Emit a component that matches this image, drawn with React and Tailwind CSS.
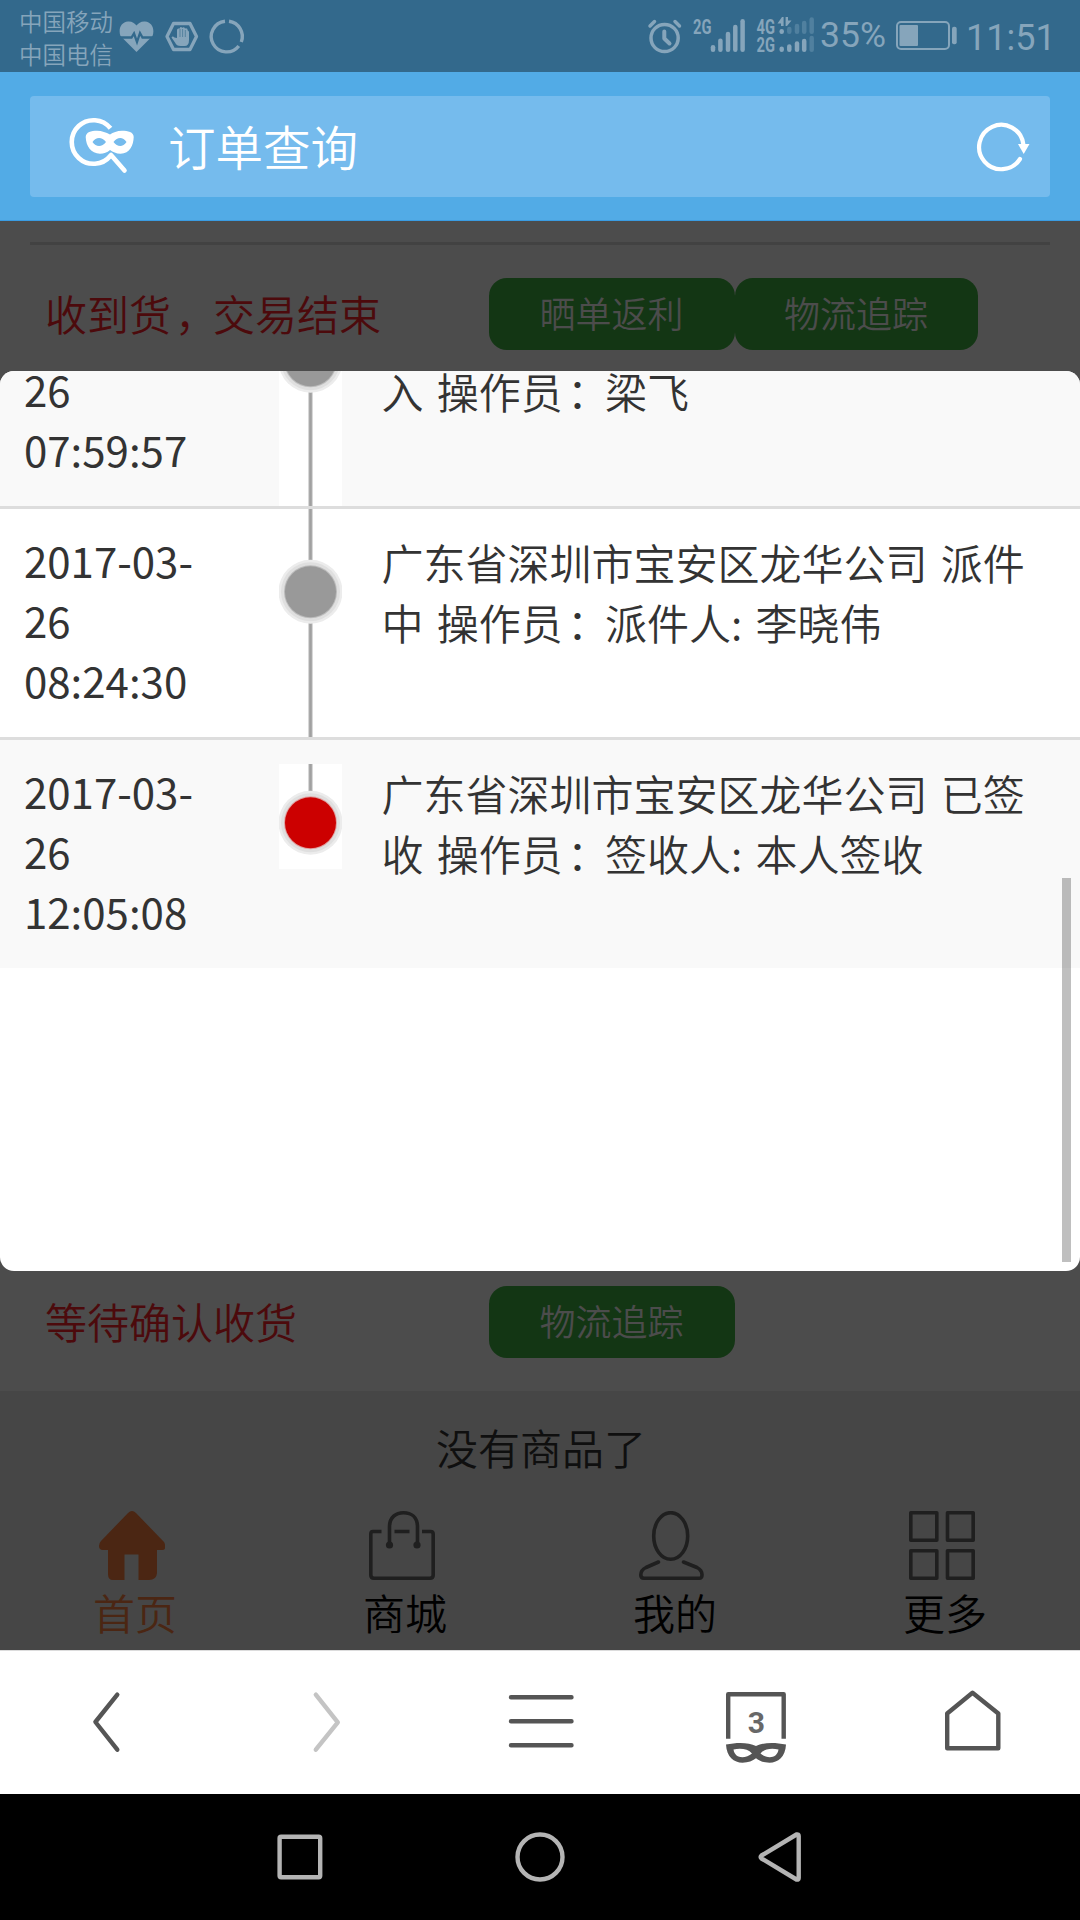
import React from "react";

// Icon whose viewBox is given in page units, drawn at natural size.
function Icon({ box, className = "", children }) {
  const [, , w, h] = box.split(" ");
  return (
    <svg viewBox={box} width={w} height={h} className={`block shrink-0 ${className}`} fill="none" aria-hidden="true">
      {children}
    </svg>
  );
}

function Bars({ bars, bottom, dim = [] }) {
  return bars.map(([x, top], i) => (
    <path
      key={x}
      d={`M${x} ${top + 2.2}V${bottom - 2.2}`}
      stroke={dim.includes(i) ? "#50809f" : "#86a5bb"}
      strokeWidth="4.5"
      strokeLinecap="round"
    />
  ));
}

function NetLabel({ x, y, children }) {
  return (
    <text x={x} y={y} fill="#86a5bb" fontFamily="Roboto" fontWeight="700" fontSize="21" textLength="18.5" lengthAdjust="spacingAndGlyphs">
      {children}
    </text>
  );
}

// Full-width punctuation sits slightly right of its default place in the cell.
function Punctuated({ children }) {
  return children.split(/([：，])/).map((part, i) =>
    part === "：" || part === "，" ? (
      <span key={i} className="relative left-[4px]">{part}</span>
    ) : (
      part
    )
  );
}

function StatusBar() {
  return (
    <div className="flex h-[72px] items-start bg-[#33698c] pl-[19px] pr-[30px] text-[#86a5bb]">
      <div className="w-[100px] shrink-0 whitespace-nowrap pt-[5px] text-[23.500px] leading-[32.500px]">
        <div>中国移动</div>
        <div>中国电信</div>
      </div>
      <Icon box="119 0 130 72">
        <path d="M136.500 52L120.500 36C118 29 121 22 128 21.500C132 21.200 134.500 23 136.500 25.500C138.500 23 141 21.200 145 21.500C152 22 155 29 152.500 36Z" fill="#86a5bb" />
        <path d="M119 37.500H131.500L134 33.500L137 42L140 33L142.500 37.500H154" stroke="#33698c" strokeWidth="2.300" />
        <path d="M173.500 23.500H190L196.500 36.500L190 49.500H173.500L167 36.500Z" stroke="#86a5bb" strokeWidth="3.300" strokeLinejoin="round" />
        <path d="M177 38V30Q177 28.500 178.500 28.500H179.800V28Q180.500 26.500 182 27.500V28Q184 26.500 185 28.500Q187.500 27.500 187.800 30.500Q189 31 189 32V40Q189 46 184.500 46H180.500Q176.500 46 175 42.500L171.500 37.500Q172.500 35.500 174.500 37.500Z" fill="#86a5bb" />
        <path d="M180 29V37M182.600 29V37M185.300 30V37" stroke="#33698c" strokeWidth=".6" />
        <path d="M225 21.200A15.400 15.400 0 1 0 238.800 46M229 21.300A15.400 15.400 0 0 1 241.300 42" stroke="#86a5bb" strokeWidth="3.400" />
      </Icon>
      <div className="ml-auto flex items-start">
        <Icon box="647 0 172 72">
          <circle cx="664.600" cy="38" r="13.600" stroke="#86a5bb" strokeWidth="3.500" />
          <path d="M664.300 31.500V38.500L669.500 43.500" stroke="#86a5bb" strokeWidth="4" strokeLinecap="round" strokeLinejoin="round" />
          <path d="M650 26L654.500 21.500M679.500 26L675 21.500" stroke="#86a5bb" strokeWidth="3.500" strokeLinecap="round" />
          <NetLabel x={693} y={34}>2G</NetLabel>
          <Bars bars={[[713, 45], [720.4, 38.5], [728, 31.7], [735.3, 24.7], [742.6, 19]]} bottom={52} />
          <NetLabel x={756.5} y={34}>4G</NetLabel>
          <NetLabel x={756.5} y={52}>2G</NetLabel>
          <Bars bars={[[781.7, 29], [789.3, 26.7], [797, 23.7], [804.2, 20.7], [811.7, 17.3]]} bottom={34} dim={[1, 2, 3, 4]} />
          <Bars bars={[[781.7, 46.5], [789.3, 44.3], [797, 41.3], [804.2, 38.7], [811.7, 35.7]]} bottom={52} dim={[4]} />
          <path d="M782 17H783.600V26H781V23.500H777.500ZM785.600 17H788V20.500H791.500L787 26H785.600Z" fill="#86a5bb" />
        </Icon>
        <div className="ml-px h-[72px] w-[66px] whitespace-nowrap pt-[14px] font-[Roboto] text-[35.500px] font-normal leading-[42px]">35%</div>
        <Icon box="895 0 63 72" className="ml-[9px]">
          <rect x="897" y="22" width="52" height="27" rx="4" stroke="#86a5bb" strokeWidth="2" />
          <rect x="899.500" y="25" width="18.500" height="21" rx="1" fill="#86a5bb" />
          <rect x="952" y="26.700" width="4.700" height="17.600" rx="2" fill="#86a5bb" />
        </Icon>
        <div className="ml-[8px] h-[72px] w-[84px] whitespace-nowrap pt-[17px] font-[Roboto] text-[36px] font-normal leading-[42px]">11:51</div>
      </div>
    </div>
  );
}

function AddressBar() {
  return (
    <div className="h-[149px] border-b border-[#3a9ce2] bg-[#52abe6] px-[30px] pt-6">
      <div className="flex h-[101px] items-center rounded-[4px] bg-[#75bbed] pl-[39px] pr-[19px]">
        <Icon box="69 96 68 101">
          <path d="M110.500 128.300A21.800 21.800 0 1 0 110.500 155.700" stroke="#fff" strokeWidth="4.600" />
          <path d="M111 155L124.500 170.500" stroke="#fff" strokeWidth="4.600" strokeLinecap="round" />
          <path
            fillRule="evenodd"
            fill="#fff"
            d="M85.700 137C86 132 91 130.700 97 130.700C102 130.700 106 132.500 110 134.500C113 132.500 117 130.700 122 130.700C128 130.700 133.700 132 133.700 137C133.500 145 130 153.700 120.500 153.700C116 153.700 113 152 110 150C107 152.500 104 153.700 100 153.700C91 153.700 86 146 85.700 137ZM92.500 142C96 136.800 102 136.800 106 142C102 147.200 96 147.200 92.500 142ZM113.500 142C117.500 136.800 123 136.800 126.500 142C123 147.200 117.500 147.200 113.500 142Z"
          />
        </Icon>
        <h1 className="-mt-px ml-[31px] text-[47.500px] leading-[60px] text-white">订单查询</h1>
        <Icon box="973 96 58 101" className="ml-auto">
          <path d="M1023.300 144A22.200 22.200 0 1 0 1020 159" stroke="#fff" strokeWidth="4.200" strokeLinecap="round" />
          <path d="M1018 144H1029.500L1023.700 154Z" fill="#fff" />
        </Icon>
      </div>
    </div>
  );
}

function GreenButton({ children, className = "" }) {
  return (
    <button className={`h-[72px] shrink-0 rounded-[18px] bg-[#133614] pb-[3px] pr-px text-[36px] leading-[69px] text-[#4c4c4c] ${className}`}>{children}</button>
  );
}

const entries = [
  { date: ["26", "07:59:57"], text: ["入 操作员：梁飞"], shade: true, clipped: true },
  { date: ["2017-03-", "26", "08:24:30"], text: ["广东省深圳市宝安区龙华公司 派件", "中 操作员：派件人: 李晓伟"], shade: false },
  { date: ["2017-03-", "26", "12:05:08"], text: ["广东省深圳市宝安区龙华公司 已签", "收 操作员：签收人: 本人签收"], shade: true, last: true },
];

// Timeline strip; the clipped variant shows only the lower part, the last one stops under its dot.
function Marker({ last, clipped }) {
  const box = last ? "0 24 63 105" : clipped ? "0 93 63 135" : "0 0 63 228";
  const lineEnd = last ? 60 : 228;
  return (
    <svg viewBox={box} width="63" height={box.split(" ")[3]} className={last ? "mt-6 bg-white" : "bg-white"} aria-hidden="true">
      <rect x="29.200" width="4.600" height={lineEnd} fill="#cfcfcf" />
      <rect x="30.200" width="2.600" height={lineEnd} fill="#a0a0a0" />
      <circle cx="31.500" cy="82.700" r="32" fill="#ececec" />
      <circle cx="31.500" cy="82.700" r="29.500" fill="#dfdfdf" />
      <circle cx="31.500" cy="82.700" r="26.500" fill={last ? "#e0a0a0" : "#bbb"} />
      <circle cx="31.500" cy="82.700" r="25.500" fill={last ? "#c00" : "#999"} />
    </svg>
  );
}

function TrackingRow({ row }) {
  const frame = row.clipped ? "h-[135px]" : "h-[231px] border-t-[3px]";
  const inset = row.clipped ? "-mt-[9px]" : "pt-6";
  return (
    <div className={`flex shrink-0 items-start border-[#ddd] text-[42px] leading-[60px] text-[#333] ${frame} ${row.shade ? "bg-[#f9f9f9]" : "bg-white"}`}>
      <div className={`w-[279px] shrink-0 pl-6 font-normal ${inset}`}>
        {row.date.map((d) => (
          <div key={d} className="relative -top-[3px]">{d}</div>
        ))}
      </div>
      <Marker last={row.last} clipped={row.clipped} />
      <div className={`whitespace-nowrap pl-[39.500px] [word-spacing:4px] ${inset}`}>
        {row.text.map((t) => (
          <div key={t} className="relative -top-px">
            <Punctuated>{t}</Punctuated>
          </div>
        ))}
      </div>
    </div>
  );
}

function TrackingDialog() {
  return (
    <div className="relative h-[900px] overflow-hidden rounded-[14px] bg-white">
      <div className="flex flex-col">
        {entries.map((r) => (
          <TrackingRow key={r.text[0]} row={r} />
        ))}
      </div>
      <div className="absolute bottom-[9px] right-[9px] h-[384px] w-[9px] bg-black/25" />
    </div>
  );
}

function TabItem({ label, tone = "text-black", children }) {
  return (
    <div className="flex flex-col items-center">
      <div className="mr-[6px] h-[69px] w-[66px]">{children}</div>
      <span className={`mt-[2px] text-[42px] leading-[60px] ${tone}`}>{label}</span>
    </div>
  );
}

function SiteTabs() {
  const s = { stroke: "#1f1f1f", strokeWidth: 3.6, strokeLinejoin: "round", strokeLinecap: "round" };
  return (
    <div className="h-[259px] bg-[#464646]">
      <p className="h-[120px] pl-[2px] pt-[26px] text-center text-[42px] leading-[60px] text-[#0f0f0f]">没有商品了</p>
      <div className="grid grid-cols-4">
        <TabItem label="首页" tone="text-[#4b2613]">
          <Icon box="0 0 66 69">
            <path d="M29 2Q33 -2 37 2L65 31Q66.500 33 66 37.500Q65.500 39 63 39H58V62Q57.500 69 50 69H39.500V43.500H25.500V69H14Q9 69 9 63V39H4Q0 39 0 35Q0 32 2 30Z" fill="#4b2613" />
          </Icon>
        </TabItem>
        <TabItem label="商城">
          <Icon box="0 0 66 69">
            <path d="M12.500 20.500H4Q1.800 20.500 1.800 23V64Q1.800 67.200 5 67.200H61Q64.200 67.200 64.200 64V23Q64.200 20.500 61.500 20.500H53M25.500 20.500H40.500" {...s} strokeLinecap="butt" />
            <path d="M20.500 33V16C20.500 6 27 1.800 34.500 1.800S48.500 6 48.500 16V33" {...s} />
            <circle cx="20.500" cy="34" r="3.600" fill="#1f1f1f" />
            <circle cx="48" cy="34" r="3.600" fill="#1f1f1f" />
          </Icon>
        </TabItem>
        <TabItem label="我的">
          <Icon box="0 0 66 69">
            <ellipse cx="31.700" cy="25" rx="17" ry="23.300" {...s} />
            <path d="M19.500 51L7 56.500Q1.800 59 1.800 64Q1.800 67.200 5 67.200H60Q63.200 67.200 63 63.500Q62.800 59 58 56.500L44.500 51" {...s} />
          </Icon>
        </TabItem>
        <TabItem label="更多">
          <Icon box="0 0 66 69">
            <rect x="1.800" y="1.800" width="26" height="27.400" {...s} />
            <rect x="38.500" y="1.800" width="25.700" height="27.400" {...s} />
            <rect x="1.800" y="39.800" width="26" height="27.400" {...s} />
            <rect x="38.500" y="39.800" width="25.700" height="27.400" {...s} />
          </Icon>
        </TabItem>
      </div>
    </div>
  );
}

function BrowserToolbar() {
  const s = { stroke: "#555", strokeWidth: 4.4, strokeLinejoin: "round", strokeLinecap: "round" };
  return (
    <div className="grid h-[144px] grid-cols-5 justify-items-center border-t border-[#dcdcdc] bg-white">
      <Icon box="68 1651 80 143">
        <path d="M117.300 1694.700L95.400 1722L117.300 1749.700" {...s} />
      </Icon>
      <Icon box="284 1651 80 143">
        <path d="M315.800 1694.700L337.800 1722.400L315.800 1749.700" {...s} stroke="#c4c4c4" />
      </Icon>
      <Icon box="500 1651 80 143">
        <path d="M511 1697.300H571.500M511 1721.300H571.500M511 1745.300H571.500" {...s} />
      </Icon>
      <Icon box="716 1651 80 143">
        <path d="M728.200 1738.700V1694.200H783.700V1738.700" {...s} strokeLinecap="butt" />
        <text x="756.400" y="1733" textAnchor="middle" fontFamily="Roboto" fontWeight="700" fontSize="30" fill="#686868">3</text>
        <path
          fillRule="evenodd"
          fill="#555"
          d="M726 1744.500C738 1742 749 1742.500 756 1746C763 1742.500 774 1742 786 1744.500C785.500 1757 778 1762.700 769.500 1762.700C763.500 1762.700 759.500 1761 756 1758.300C752.500 1761 748.500 1762.700 742.500 1762.700C734 1762.700 726.500 1757 726 1744.500ZM733.500 1749.500C741 1748 748 1749 752 1753.500C746 1758.500 735 1759.500 733.500 1749.500ZM778.500 1749.500C771 1748 764 1749 760.500 1753.500C766 1758.500 777 1759.500 778.500 1749.500Z"
        />
      </Icon>
      <Icon box="932 1651 80 143">
        <path d="M972.500 1692.800L998.300 1713.500V1748.200H947.200V1713.500Z" {...s} />
      </Icon>
    </div>
  );
}

function SystemNav() {
  const s = { stroke: "#b4b4b4", strokeWidth: 4.4, strokeLinejoin: "round" };
  return (
    <div className="grid h-[126px] grid-cols-3 justify-items-center bg-black px-[180px]">
      <Icon box="270 1794 60 126">
        <rect x="279.600" y="1836.800" width="40.600" height="40.400" rx="1.500" {...s} />
      </Icon>
      <Icon box="510 1794 60 126">
        <circle cx="540" cy="1857" r="22.500" {...s} />
      </Icon>
      <Icon box="750 1794 60 126">
        <path d="M798.700 1836Q798.700 1834 796.500 1834.500L761.500 1855.500Q760 1857 761.500 1858.500L796.500 1879.500Q798.700 1880 798.700 1878Z" {...s} />
      </Icon>
    </div>
  );
}

export default function App() {
  return (
    <div className="flex h-[1920px] w-[1080px] flex-col overflow-hidden bg-[#4c4c4c] font-['Noto_Sans_CJK_SC',sans-serif] font-[350]">
      <StatusBar />
      <AddressBar />
      <div className="h-[150px] px-[30px] pt-[21px]">
        <div className="h-[3px] bg-[#424242]" />
        <div className="flex items-center pt-[33px]">
          <span className="-mt-[2px] w-[459px] shrink-0 pl-[15px] text-[42px] leading-[60px] text-[#4c0a0c]">
            <Punctuated>收到货，交易结束</Punctuated>
          </span>
          <GreenButton className="w-[246px]">晒单返利</GreenButton>
          <GreenButton className="w-[243px]">物流追踪</GreenButton>
        </div>
      </div>
      <TrackingDialog />
      <div className="flex h-[120px] items-start px-[30px] pt-[15px]">
        <span className="w-[459px] shrink-0 pl-[15px] pt-[5px] text-[42px] leading-[60px] text-[#4c0a0c]">等待确认收货</span>
        <GreenButton className="w-[246px]">物流追踪</GreenButton>
      </div>
      <SiteTabs />
      <BrowserToolbar />
      <SystemNav />
    </div>
  );
}
